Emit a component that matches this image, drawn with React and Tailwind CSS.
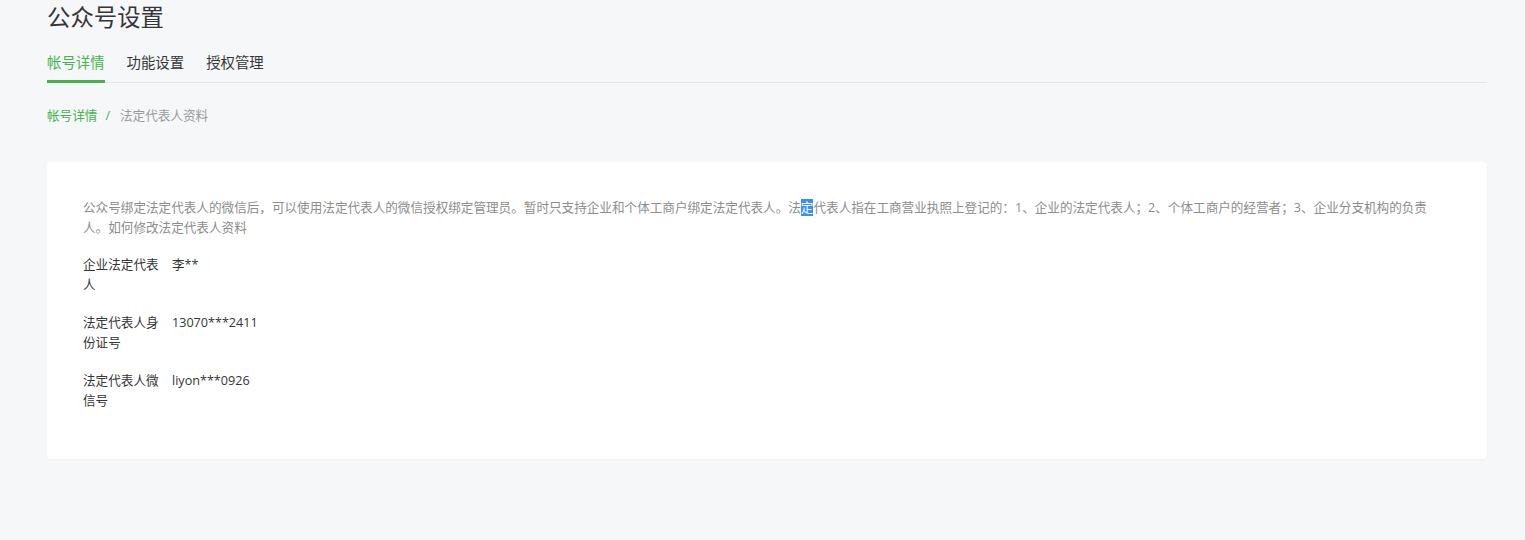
const font = { fontFamily: '"Open Sans", "Noto Sans CJK SC", sans-serif' };

const tabs = ['帐号详情', '功能设置', '授权管理'];

const rows = [
    { label: '企业法定代表人', value: '李**' },
    { label: '法定代表人身份证号', value: '13070***2411' },
    { label: '法定代表人微信号', value: 'liyon***0926' },
];

export default function App() {
    return (
        <div
            className="min-h-[540px] w-full bg-[#f6f7f9] pl-[47px] pr-[38px] text-[#353535]"
            style={font}
        >
            <h1 className="text-[23.4px] leading-[34px] font-normal text-[#353535]">
                公众号设置
            </h1>

            <div className="mt-[19px] flex gap-[22px] border-b border-[#e4e6e9]">
                {tabs.map((tab, i) => (
                    <div
                        key={tab}
                        className={
                            i === 0
                                ? '-mb-px border-b-[3px] border-[#44b549] pb-[7px] text-[14.4px] leading-[20px] text-[#44b549]'
                                : '-mb-px border-b-[3px] border-transparent pb-[7px] text-[14.4px] leading-[20px] text-[#353535]'
                        }
                    >
                        {tab}
                    </div>
                ))}
            </div>

            <div className="mt-[23px] flex items-center text-[12.6px] leading-[20px]">
                <span className="text-[#44b549]">帐号详情</span>
                <span className="ml-[8px] mr-[10px] text-[#44b549]">/</span>
                <span className="text-[#9a9a9a]">法定代表人资料</span>
            </div>

            <div className="mt-[36px] w-[1440px] rounded-[4px] bg-white px-[36px] pt-[36px] pb-[30px] shadow-[0_1px_2px_rgba(0,0,0,0.04)]">
                <p className="mb-[17px] max-w-[1354px] text-[12.6px] leading-[20px] text-[#8d8d8d]">
                    公众号绑定法定代表人的微信后，可以使用法定代表人的微信授权绑定管理员。暂时只支持企业和个体工商户绑定法定代表人。法<span className="bg-[#3390ff] text-white">定</span>代表人指在工商营业执照上登记的：1、企业的法定代表人；2、个体工商户的经营者；3、企业分支机构的负责人。如何修改法定代表人资料
                </p>

                {rows.map((row) => (
                    <div key={row.label} className="mb-[18px] flex text-[12.6px] leading-[20px]">
                        <div className="w-[89px] shrink-0 pr-[12px] text-[#353535]">{row.label}</div>
                        <div className="text-[#353535]">{row.value}</div>
                    </div>
                ))}
            </div>
        </div>
    );
}
